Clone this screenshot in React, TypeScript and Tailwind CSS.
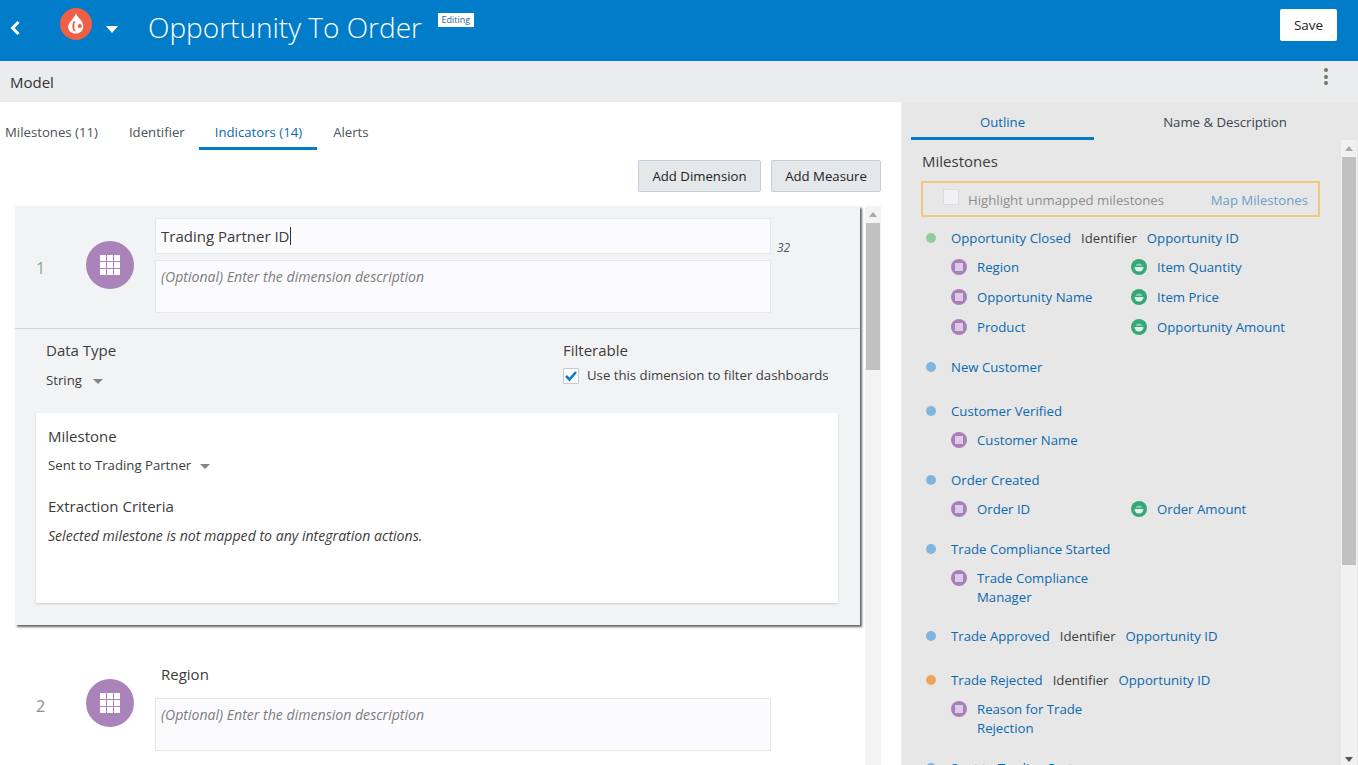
type Item = { label: string; kind: "dim" | "measure" }
type Milestone = {
  name: string
  color: string
  identifier?: string
  tight?: boolean
  left?: Item[]
  right?: Item[]
}

const milestones: Milestone[] = [
  {
    name: "Opportunity Closed",
    color: "bg-[#90cf9c]",
    identifier: "Opportunity ID",
    left: [
      { label: "Region", kind: "dim" },
      { label: "Opportunity Name", kind: "dim" },
      { label: "Product", kind: "dim" },
    ],
    right: [
      { label: "Item Quantity", kind: "measure" },
      { label: "Item Price", kind: "measure" },
      { label: "Opportunity Amount", kind: "measure" },
    ],
  },
  { name: "New Customer", color: "bg-[#7fb6e0]" },
  { name: "Customer Verified", color: "bg-[#7fb6e0]", left: [{ label: "Customer Name", kind: "dim" }] },
  {
    name: "Order Created",
    color: "bg-[#7fb6e0]",
    left: [{ label: "Order ID", kind: "dim" }],
    right: [{ label: "Order Amount", kind: "measure" }],
  },
  { name: "Trade Compliance Started", color: "bg-[#7fb6e0]", tight: true, left: [{ label: "Trade Compliance Manager", kind: "dim" }] },
  { name: "Trade Approved", color: "bg-[#7fb6e0]", identifier: "Opportunity ID" },
  {
    name: "Trade Rejected",
    color: "bg-[#f0a35e]",
    identifier: "Opportunity ID",
    left: [{ label: "Reason for Trade Rejection", kind: "dim" }],
  },
  { name: "Sent to Trading Partner", color: "bg-[#7fb6e0]" },
]

function GridIcon({ className }: { className: string }) {
  return (
    <svg viewBox="0 0 20 20" className={className} fill="white">
      {[0, 7, 14].map((y) =>
        [0, 7, 14].map((x) => <rect key={`${x}-${y}`} x={x} y={y} width="6" height="6" />)
      )}
    </svg>
  )
}

function DimensionBadge() {
  return (
    <div className="w-12 h-12 rounded-full bg-[#a983b9] flex items-center justify-center shrink-0">
      <GridIcon className="w-5 h-5" />
    </div>
  )
}

function SmallIcon({ kind }: { kind: Item["kind"] }) {
  if (kind === "dim") {
    return (
      <div className="w-4 h-4 rounded-full bg-[#a87fbb] flex items-center justify-center shrink-0">
        <div className="w-2 h-2 bg-[#dccbe4]" />
      </div>
    )
  }
  return (
    <svg viewBox="0 0 16 16" className="w-4 h-4 shrink-0">
      <circle cx="8" cy="8" r="8" fill="#36a878" />
      <path d="M3.5 8 A4.5 4.5 0 0 0 12.5 8 Z" fill="#e2f4ea" />
      <path d="M4.5 6.8 A3.8 3.8 0 0 1 11.5 6.8 Z" fill="#8fd3b4" />
    </svg>
  )
}

function ItemRow({ item }: { item: Item }) {
  return (
    <div className="flex items-start gap-[10px]">
      <SmallIcon kind={item.kind} />
      <span className="text-[#0b69ae] leading-[19px] -mt-px">{item.label}</span>
    </div>
  )
}

function MilestoneGroup({ m }: { m: Milestone }) {
  const hasChildren = !!m.left
  return (
    <div className={m.tight ? "mb-[19px]" : hasChildren ? "mb-[20px]" : "mb-[24px]"}>
      <div className="flex items-center h-5 leading-5">
        <div className={`w-[10px] h-[10px] rounded-full ml-[5px] mr-[15px] ${m.color}`} />
        <span className="text-[#0b69ae]">{m.name}</span>
        {m.identifier && <span className="ml-[10px] text-[#3c3c3c]">Identifier</span>}
        {m.identifier && <span className="ml-[10px] text-[#0b69ae]">{m.identifier}</span>}
      </div>
      {hasChildren && (
        <div className="flex pl-[30px] mt-[11px]">
          <div className="w-[180px] flex flex-col gap-[12px]">
            {m.left!.map((i) => <ItemRow key={i.label} item={i} />)}
          </div>
          <div className="flex flex-col gap-[12px]">
            {m.right?.map((i) => <ItemRow key={i.label} item={i} />)}
          </div>
        </div>
      )}
    </div>
  )
}

function ScrollTrack({ thumbHeight, className, downArrow }: { thumbHeight: string; className: string; downArrow?: boolean }) {
  return (
    <div className={`flex flex-col items-stretch ${className}`}>
      <div className="flex justify-center shrink-0 h-[17px]">
        <div className="w-0 h-0 mt-[6px] border-x-[4px] border-x-transparent border-b-[5px] border-b-[#a8a8a8]" />
      </div>
      <div className={`bg-[#c1c1c1] mx-[1px] ${thumbHeight}`} />
      {downArrow && (
        <div className="mt-auto flex justify-center h-[16px] shrink-0">
          <div className="w-0 h-0 mt-[8px] border-x-[4px] border-x-transparent border-t-[5px] border-t-[#555]" />
        </div>
      )}
    </div>
  )
}

export default function App() {
  return (
    <div className="w-[1358px] h-[765px] overflow-hidden flex flex-col bg-white text-[13.2px] text-[#3c3c3c] font-['Open_Sans',sans-serif]">
      {/* top bar */}
      <header className="h-[61px] bg-[#007cc8] flex items-center shrink-0 text-white">
        <svg viewBox="0 0 12 16" className="w-3 h-4 ml-[9px] mb-[6px]" fill="none" stroke="white" strokeWidth="3">
          <path d="M9.5 2 L3.5 8 L9.5 14" />
        </svg>
        <svg viewBox="0 0 32 32" className="w-8 h-8 ml-[39px] mb-[13px]">
          <circle cx="16" cy="16" r="16" fill="#ee5f45" />
          <path d="M16 5 C17 9 21 11 22.5 15 C24.5 20 22 25 17 25.5 C11.5 26 7.5 22.5 8.2 18 C8.7 14.5 11.5 13 13 10.5 C14.2 8.8 15.5 7.5 16 5 Z" fill="white" />
          <path d="M13.8 13 C11.8 16.5 11.8 20.5 14.3 23.5 L15.6 23 C13.8 20 13.8 17 15.3 13.5 Z" fill="#ee5f45" />
          <circle cx="19.8" cy="18" r="2.1" fill="#ee5f45" />
        </svg>
        <div className="w-0 h-0 ml-[14px] mb-[2px] border-x-[6px] border-x-transparent border-t-[7px] border-t-white" />
        <h1 className="ml-[30px] mb-[8px] text-[28px] font-light leading-none">Opportunity To Order</h1>
        <div className="ml-[16px] mb-[21px] bg-white text-[#2a5f96] text-[9px] leading-[14px] w-[36px] text-center">Editing</div>
        <button className="ml-auto mr-[21px] mb-[11px] w-[57px] h-[32px] bg-white rounded-[2px] text-[#222] text-[13.5px]">Save</button>
      </header>

      {/* model bar */}
      <div className="h-[41px] bg-[#ebecee] flex items-center justify-between shrink-0 pl-[10px] pr-[30px]">
        <span className="text-[15px] text-[#333] pt-[2px]">Model</span>
        <div className="flex flex-col gap-[2.5px] mb-[10px]">
          <div className="w-1 h-1 rounded-full bg-[#6f7a66]" />
          <div className="w-1 h-1 rounded-full bg-[#6f7a66]" />
          <div className="w-1 h-1 rounded-full bg-[#6f7a66]" />
        </div>
      </div>

      <div className="flex flex-1 min-h-0">
        {/* left editor */}
        <div className="w-[901px] shrink-0 flex flex-col min-h-0">
          <nav className="flex h-[48px] shrink-0 items-stretch text-[#4b5258]">
            <div className="pl-[5px] pr-[16px] flex items-center pt-[16px] border-b-[3px] border-transparent">Milestones (11)</div>
            <div className="px-[15px] flex items-center pt-[16px] border-b-[3px] border-transparent">Identifier</div>
            <div className="pl-[16px] pr-[15px] flex items-center pt-[16px] text-[#0b69ae] border-b-[3px] border-[#007cc8] -ml-px">Indicators (14)</div>
            <div className="px-[16px] flex items-center pt-[16px] border-b-[3px] border-transparent">Alerts</div>
          </nav>

          <div className="flex justify-end gap-[10px] pr-[20px] mt-[10px] shrink-0">
            <button className="h-[32px] w-[123px] pt-px bg-[#e4e8ea] border border-[#c4ced7] rounded-[2px] text-[#222]">Add Dimension</button>
            <button className="h-[32px] w-[110px] pt-px bg-[#e4e8ea] border border-[#c4ced7] rounded-[2px] text-[#222]">Add Measure</button>
          </div>

          <div className="flex flex-1 min-h-0 mt-[14px] pl-[15px]">
            <div className="w-[845px] shrink-0">
              {/* expanded card */}
              <div className="h-[419px] bg-[#f2f3f5] shadow-[1.5px_1.5px_2px_#666]">
                <div className="flex h-[123px] border-b border-[#d4d6d8]">
                  <div className="w-[71px] pl-[21px] pt-[51px] text-[16px] text-[#7fa890] leading-[22px]">1</div>
                  <div className="pt-[35px]"><DimensionBadge /></div>
                  <div className="ml-[21px] w-[616px] pt-[12px]">
                    <div className="h-[36px] bg-[#fbfbfd] border border-[#e6e7e9] text-[15px] leading-[34px] pl-[5px] flex items-center">
                      Trading Partner ID<span className="w-px h-[18px] bg-[#333]" />
                    </div>
                    <div className="h-[53px] mt-[6px] bg-[#fbfbfd] border border-[#e6e7e9] pl-[5px] pt-[5px] italic text-[14.1px] text-[#7d7d7d]">
                      (Optional) Enter the dimension description
                    </div>
                  </div>
                  <div className="ml-[6px] pt-[33px] italic text-[12px] text-[#555]">32</div>
                </div>
                <div className="flex pl-[31px] pt-[11px] h-[84px]">
                  <div className="w-[517px]">
                    <div className="text-[15px] leading-[20px]">Data Type</div>
                    <div className="flex items-center mt-[12px] h-[18px]">
                      String
                      <div className="ml-[11px] w-0 h-0 border-x-[5px] border-x-transparent border-t-[5px] border-t-[#858585]" />
                    </div>
                  </div>
                  <div>
                    <div className="text-[15px] leading-[20px]">Filterable</div>
                    <div className="flex items-center mt-[7px] h-[18px]">
                      <div className="w-4 h-4 bg-white border border-[#c3c8cd] rounded-[1px] flex items-center justify-center">
                        <svg viewBox="0 0 14 14" className="w-[14px] h-[14px]" fill="none" stroke="#0d7fc9" strokeWidth="2.6">
                          <path d="M2 7 L5.5 10.5 L12 3" />
                        </svg>
                      </div>
                      <span className="ml-[8px]">Use this dimension to filter dashboards</span>
                    </div>
                  </div>
                </div>
                <div className="ml-[21px] mr-[22px] h-[190px] bg-white shadow-[0_1px_2px_#ccc] pl-[12px] pt-[13px]">
                  <div className="text-[15px] leading-[20px]">Milestone</div>
                  <div className="flex items-center mt-[11px] h-[18px]">
                    Sent to Trading Partner
                    <div className="ml-[9px] w-0 h-0 border-x-[5px] border-x-transparent border-t-[5px] border-t-[#858585]" />
                  </div>
                  <div className="text-[15px] leading-[20px] mt-[21px]">Extraction Criteria</div>
                  <div className="italic text-[14.1px] mt-[11px] leading-[18px]">Selected milestone is not mapped to any integration actions.</div>
                </div>
              </div>

              {/* second dimension */}
              <div className="flex mt-[40px]">
                <div className="w-[71px] pl-[21px] pt-[30px] text-[16px] text-[#8a8f95] leading-[22px]">2</div>
                <div className="pt-[14px]"><DimensionBadge /></div>
                <div className="ml-[21px] w-[616px]">
                  <div className="pl-[6px] h-[33px] text-[15px] leading-[18px]">Region</div>
                  <div className="h-[53px] bg-[#fbfbfd] border border-[#e6e7e9] pl-[5px] pt-[5px] italic text-[14.1px] text-[#7d7d7d]">
                    (Optional) Enter the dimension description
                  </div>
                </div>
              </div>
            </div>
            <ScrollTrack className="w-[16px] ml-[5px] bg-[#f3f3f3] h-[559px]" thumbHeight="h-[147px]" />
          </div>
        </div>

        {/* right outline */}
        <aside className="flex-1 bg-[#e7e7e7] flex flex-col min-h-0 border-l border-[#f0f0f0]">
          <div className="flex h-[38px] shrink-0 ml-[9px] mr-[2px]">
            <div className="w-[183px] flex items-center justify-center pt-[7px] text-[#0b69ae] border-b-[3px] border-[#007cc8]">Outline</div>
            <div className="flex-1 flex items-center justify-center pt-[4px] text-[#3c4650]">Name &amp; Description</div>
          </div>
          <div className="flex flex-1 min-h-0">
            <div className="w-[439px] shrink-0 overflow-hidden pl-[19px] pt-[11px]">
              <div className="text-[15px] leading-[20px] pl-px">Milestones</div>
              <div className="w-[399px] h-[36px] mt-[10px] border-2 border-[#f0c97f] flex items-center pl-[20px] pr-[10px] text-[#8e8e8e]">
                <div className="w-4 h-4 bg-[#f1f1f3] border border-[#dcdcdc] mb-[4px]" />
                <span className="ml-[9px] pt-[4px]">Highlight unmapped milestones</span>
                <span className="ml-auto pt-[4px] text-[#6fa0c8]">Map Milestones</span>
              </div>
              <div className="mt-[11px]">
                {milestones.map((m) => <MilestoneGroup key={m.name} m={m} />)}
              </div>
            </div>
            <ScrollTrack className="w-[16px] bg-[#f1f1f1]" thumbHeight="h-[408px]" downArrow />
          </div>
        </aside>
      </div>
    </div>
  )
}
